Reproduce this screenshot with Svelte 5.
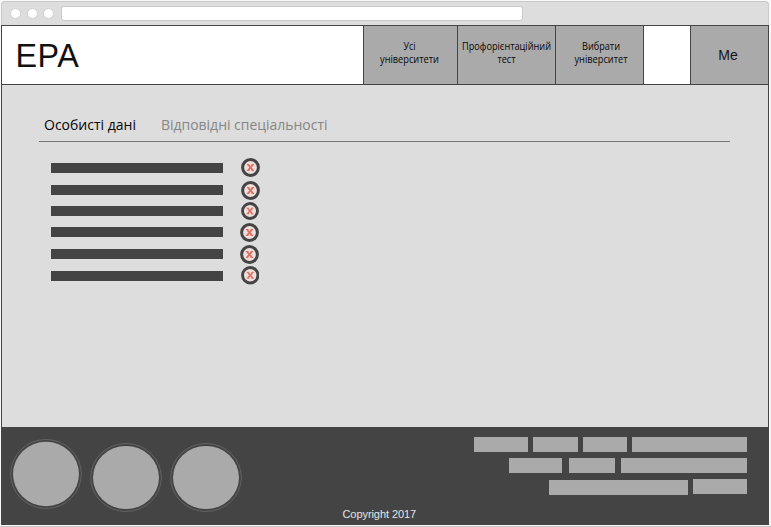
<script>
  const nav = [
    { lines: [['Усі', 12], ['університети', 59]], width: 93, shift: -1 },
    { lines: [['Профорієнтаційний', 89], ['тест', 18]], width: 97, shift: 0 },
    { lines: [['Вибрати', 38], ['університет', 53]], width: 87, shift: 1.5 }
  ];
  const rows = [
    { gap: 0, x: 17.5, y: -5, size: 19 },
    { gap: 12, x: 17.5, y: -4.5, size: 19 },
    { gap: 11, x: 17.5, y: -4, size: 18 },
    { gap: 11, x: 16.5, y: -4.5, size: 19 },
    { gap: 12, x: 16.5, y: -4.5, size: 19 },
    { gap: 12, x: 17.5, y: -5, size: 18.5 }
  ];
  const discs = [
    { top: 12, h: 70, ry: 32.3 },
    { top: 16, h: 69, ry: 31.6 },
    { top: 16, h: 69, ry: 31.6 }
  ];
  const links = [
    [[54, 5], [45, 5], [44, 5], [115, 0]],
    [[53, 7], [46, 6], [126, 0]],
    [[139, 5], [54, 0, true]]
  ];
</script>

<div class="window">
  <div class="chrome">
    <i></i><i></i><i></i>
    <div class="address"></div>
  </div>
  <header>
    <div class="logo">EPA</div>
    {#each nav as item}
      <div class="cell" style="width:{item.width}px">
        <svg width={item.width} height="58">
          {#each item.lines as [text, length], i}
            <text x={(item.width - length) / 2 + item.shift} y={24.4 + i * 13} textLength={length} lengthAdjust="spacingAndGlyphs">{text}</text>
          {/each}
        </svg>
      </div>
    {/each}
    <div class="blank"></div>
    <div class="me">Me</div>
  </header>
  <main>
    <div class="tabs">
      <svg width="691" height="30">
        <text class="active" x="5" y="19.3" textLength="92" lengthAdjust="spacingAndGlyphs">Особисті дані</text>
        <text class="muted" x="122" y="19.3" textLength="166.5" lengthAdjust="spacingAndGlyphs">Відповідні спеціальності</text>
      </svg>
    </div>
    <div class="list">
      {#each rows as r}
        <div class="row" style="margin-top:{r.gap}px">
          <div class="bar"></div>
          <svg class="remove" viewBox="0 0 19 19" style="width:{r.size}px;height:{r.size}px;margin-left:{r.x}px;margin-top:{r.y}px">
            <circle cx="9.5" cy="9.5" r="7.9" fill="#eedfdd" stroke="#444" stroke-width="3" />
            <path d="M7 6.6 L12 12.4 M12 6.6 L7 12.4" stroke="#dc6f62" stroke-width="1.7" />
            <path d="M5.9 6.5h2.5M10.6 6.5h2.5M5.9 12.5h2.5M10.6 12.5h2.5" stroke="#dc6f62" stroke-width="1" />
          </svg>
        </div>
      {/each}
    </div>
  </main>
  <footer>
    <div class="discs">
      {#each discs as d}
        <svg width="72" height={d.h} style="margin-top:{d.top}px">
          <ellipse cx="36" cy={d.h / 2} rx="35.3" ry={d.h / 2 - 0.5} fill="none" stroke="#707070" stroke-width="0.7" />
          <ellipse cx="36" cy={d.h / 2} rx="33" ry={d.ry} fill="#aaa" />
        </svg>
      {/each}
    </div>
    <p>Copyright 2017</p>
    <div class="links">
      {#each links as line}
        <div class="line">
          {#each line as [width, gap, raised]}
            <span class:raised style="width:{width}px;margin-right:{gap}px"></span>
          {/each}
        </div>
      {/each}
    </div>
  </footer>
</div>

<style>
  :global(body) { margin: 0; background: #f8f8f8; overflow: hidden; }
  .window {
    box-sizing: border-box;
    width: 771px;
    height: 527px;
    padding: 1px 2px 0 1px;
    border-bottom: 1px solid #c6c6c6;
    font-family: "Liberation Sans", Arial, sans-serif;
  }
  .chrome {
    box-sizing: border-box;
    height: 24px;
    background: #ddd;
    border: 1px solid #c8c8c8;
    border-bottom: 0;
    border-radius: 4px 4px 0 0;
    display: flex;
    align-items: center;
    padding-left: 8px;
  }
  .chrome i { box-sizing: border-box; width: 11px; height: 11px; border-radius: 50%; background: #fff; border: 1px solid #d0d0d0; margin-right: 5.5px; }
  .address { box-sizing: border-box; width: 462px; height: 15px; margin-left: 1.5px; background: #fff; border: 1px solid #c9c9c9; border-radius: 3px; }
  header {
    display: flex;
    height: 58px;
    background: #fff;
    border: 1px solid #444;
  }
  .logo { width: 361px; box-sizing: border-box; padding: 11px 0 0 13.5px; font-size: 32.3px; line-height: 38px; color: #111; letter-spacing: 0.5px; }
  .cell, .me, .blank { border-left: 1px solid #444; background: #aaa; }
  .cell svg { display: block; overflow: visible; }
  .cell text { font: 500 10.5px "Open Sans", "Noto Sans", sans-serif; fill: #080808; }
  .blank { width: 46px; background: #fff; }
  .me { flex: 1; text-align: center; font-size: 14px; line-height: 59px; color: #151515; padding-right: 3px; }
  main { height: 342px; background: #ddd; border: solid #444; border-width: 0 1px; }
  .tabs { width: 691px; margin-left: 37px; padding-top: 26px; border-bottom: 1px solid #757575; }
  .tabs svg { display: block; }
  .tabs text { font: 15px "Open Sans", "Noto Sans", sans-serif; }
  .tabs .active { fill: #050505; }
  .tabs .muted { fill: #868686; }
  .list { padding: 21px 0 0 49px; }
  .row { display: flex; height: 10px; }
  .bar { width: 172px; background: #444; }
  .remove { display: block; flex: none; }
  footer { height: 98px; background: #444; display: flex; }
  .discs { display: flex; gap: 8px; padding-left: 9px; }
  .discs svg { display: block; }
  footer p { margin: 80px 0 0 100.5px; width: 75px; font-size: 11px; line-height: 14px; letter-spacing: -0.07px; color: #e5e5e5; white-space: nowrap; }
  .links { margin-left: auto; width: 295px; padding: 10px 22px 0 0; box-sizing: border-box; display: flex; flex-direction: column; }
  .line { display: flex; justify-content: flex-end; height: 15px; margin-bottom: 6px; }
  .line:last-child { margin-top: 1px; }
  .line span { background: #aaa; height: 15px; flex: none; }
  .raised { margin-top: -1px; }
</style>
